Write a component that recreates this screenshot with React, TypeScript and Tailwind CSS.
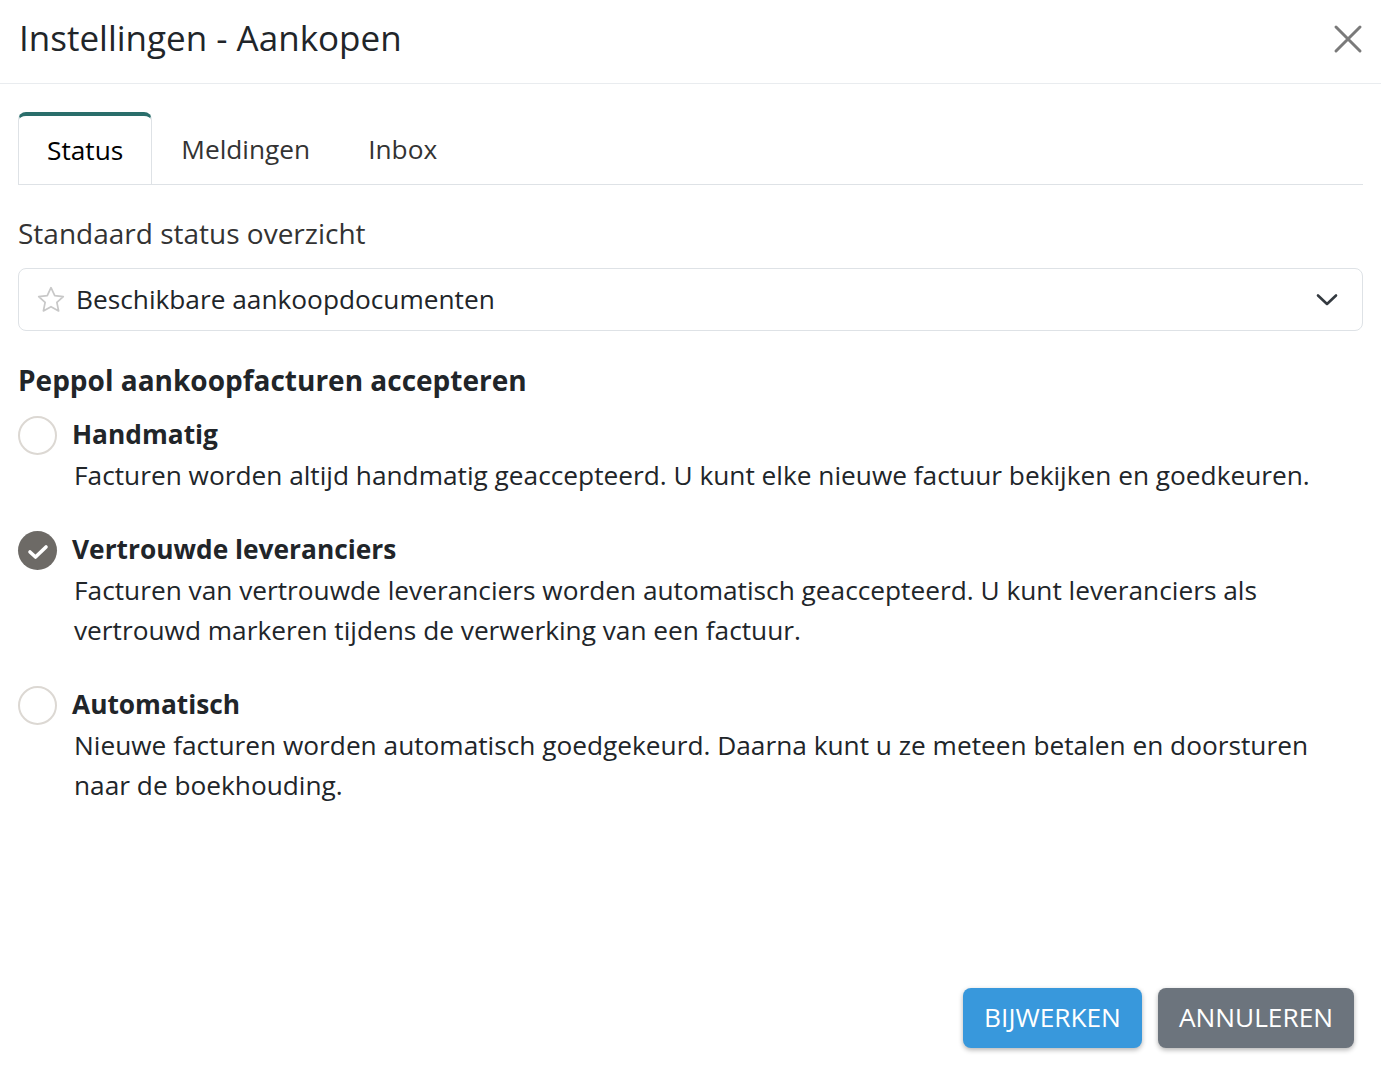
import React, { useState } from "react";

const options = [
  {
    id: "manual",
    label: "Handmatig",
    text: "Facturen worden altijd handmatig geaccepteerd. U kunt elke nieuwe factuur bekijken en goedkeuren.",
  },
  {
    id: "trusted",
    label: "Vertrouwde leveranciers",
    text: "Facturen van vertrouwde leveranciers worden automatisch geaccepteerd. U kunt leveranciers als vertrouwd markeren tijdens de verwerking van een factuur.",
  },
  {
    id: "auto",
    label: "Automatisch",
    text: "Nieuwe facturen worden automatisch goedgekeurd. Daarna kunt u ze meteen betalen en doorsturen naar de boekhouding.",
  },
];

function Radio({ checked }: { checked: boolean }) {
  if (checked) {
    return (
      <span className="flex h-[39px] w-[39px] shrink-0 items-center justify-center rounded-full bg-[#6d6a66]">
        <svg width="22" height="16" viewBox="0 0 22 16" fill="none" className="mt-[2px]">
          <path d="M3 8 L8.5 13 L19 3" stroke="white" strokeWidth="3.6" strokeLinecap="round" strokeLinejoin="round" />
        </svg>
      </span>
    );
  }
  return <span className="block h-[39px] w-[39px] shrink-0 rounded-full border-2 border-[#dcd8d3] bg-white" />;
}

export default function App() {
  const [tab, setTab] = useState("Status");
  const [choice, setChoice] = useState("trusted");

  return (
    <div className="flex h-screen flex-col bg-white text-[#212529]" style={{ fontFamily: '"Open Sans", sans-serif' }}>
      {/* Header */}
      <div className="flex h-[84px] shrink-0 items-center justify-between border-b border-[#e9ecef] pb-[9px] pl-[19px] pr-[18px]">
        <h1 className="text-[35px] font-normal leading-none text-[#212529]">Instellingen - Aankopen</h1>
        <button className="mt-[4px]">
          <svg width="30" height="30" viewBox="0 0 30 30" fill="none">
            <path d="M3 3 L27 27 M27 3 L3 27" stroke="#7a7a7a" strokeWidth="3" strokeLinecap="round" />
          </svg>
        </button>
      </div>

      <div className="flex flex-1 flex-col px-[18px]">
        {/* Tabs */}
        <div className="mt-[28px] flex border-b border-[#dee2e6] pr-[1px]">
          {["Status", "Meldingen", "Inbox"].map((t) => (
            <button
              key={t}
              onClick={() => setTab(t)}
              className={
                tab === t
                  ? "-mb-px h-[72px] rounded-t-[8px] border-x border-t-4 border-[#dee2e6] border-t-[#2a6e6b] bg-white px-[28px] pt-[2px] text-[26.25px] text-black"
                  : "h-[72px] px-[29px] pt-[4px] text-[26.25px] text-[#333]"
              }
            >
              {t}
            </button>
          ))}
        </div>

        {/* Default status */}
        <div className="mt-[30px] text-[28px] leading-[36px] text-[#333]">Standaard status overzicht</div>
        <div className="mt-[17px] flex h-[63px] items-center rounded-[8px] border border-[#dee2e6] pl-[16px] pr-[24px]">
          <svg width="32" height="32" viewBox="0 0 24 24" fill="none" className="mr-[9px]">
            <path
              d="M12 2.8 L14.8 8.7 L21.2 9.4 L16.4 13.8 L17.7 20.2 L12 17 L6.3 20.2 L7.6 13.8 L2.8 9.4 L9.2 8.7 Z"
              stroke="#c8c8c8"
              strokeWidth="1.3"
              strokeLinejoin="round"
            />
          </svg>
          <span className="flex-1 text-[26.25px] text-[#212529]">Beschikbare aankoopdocumenten</span>
          <svg width="22" height="14" viewBox="0 0 22 14" fill="none">
            <path d="M2 2.5 L11 11 L20 2.5" stroke="#343a40" strokeWidth="2.6" strokeLinecap="round" strokeLinejoin="round" />
          </svg>
        </div>

        {/* Peppol */}
        <h2 className="mt-[29px] text-[28px] font-bold leading-[40px] text-[#212529]">Peppol aankoopfacturen accepteren</h2>
        <div className="mt-[16px] flex flex-col gap-[36px]">
          {options.map((o) => (
            <div key={o.id} className="flex cursor-pointer flex-col" onClick={() => setChoice(o.id)}>
              <div className="flex items-center gap-[15px]">
                <Radio checked={choice === o.id} />
                <span className="-mt-[4px] text-[26.3px] font-bold leading-[36px] text-[#212529]">{o.label}</span>
              </div>
              <p className="pl-[56px] pr-[40px] text-[26.25px] leading-[40px] text-[#212529]">{o.text}</p>
            </div>
          ))}
        </div>

        {/* Footer */}
        <div className="mt-auto flex justify-end gap-[16px] pb-[25px] pr-[9px]">
          <button className="h-[60px] rounded-[8px] bg-[#3898dc] px-[21px] text-[26.25px] text-white shadow-[0_2px_5px_rgba(0,0,0,0.3)]">
            BIJWERKEN
          </button>
          <button className="h-[60px] rounded-[8px] bg-[#6c747d] px-[21px] text-[26.25px] text-white shadow-[0_2px_5px_rgba(0,0,0,0.3)]">
            ANNULEREN
          </button>
        </div>
      </div>
    </div>
  );
}
